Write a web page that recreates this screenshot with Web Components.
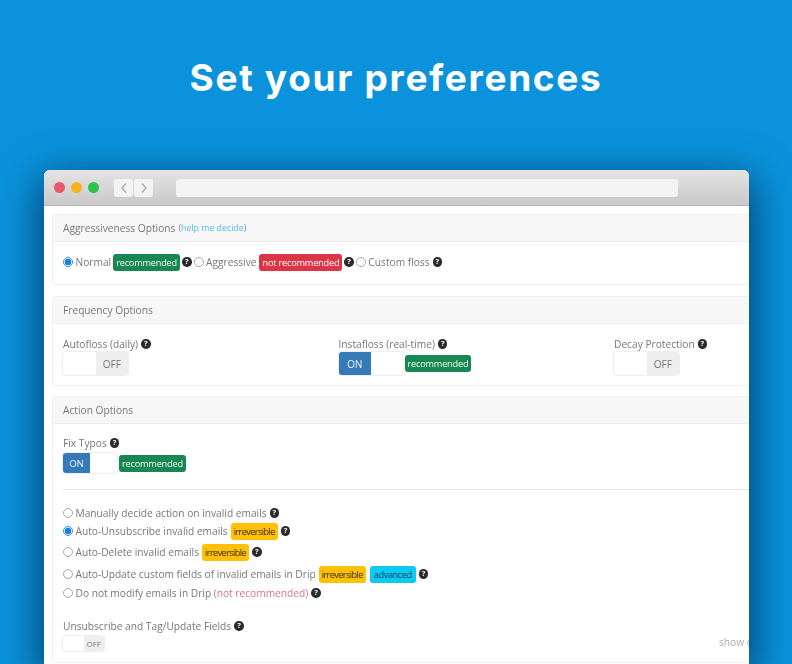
<!DOCTYPE html>
<html>
<head>
<meta charset="utf-8">
<title>Set your preferences</title>
<style>
  html, body { margin: 0; padding: 0; height: 100%; }
  body { width: 792px; height: 664px; overflow: hidden; font-family: "Open Sans", "Liberation Sans", sans-serif; }
</style>
</head>
<body>
<app-stage heading="Set your preferences">
  <browser-window>
    <option-panel heading="Aggressiveness Options">
      <span slot="extra">(<a>help me decide</a>)</span>
      <div style="display:flex;align-items:center;height:20px;margin:-1px 0 1px;white-space:nowrap">
        <radio-option checked>Normal</radio-option>
        <tag-badge kind="green" style="margin-left:2px">recommended</tag-badge>
        <help-icon style="margin-left:2px"></help-icon>
        <radio-option style="margin-left:2px">Aggressive</radio-option>
        <tag-badge kind="red" style="margin-left:3px">not recommended</tag-badge>
        <help-icon style="margin-left:2px"></help-icon>
        <radio-option style="margin-left:2px">Custom floss</radio-option>
        <help-icon style="margin-left:3px"></help-icon>
      </div>
    </option-panel>

    <option-panel heading="Frequency Options" style="margin-top:11px">
      <freq-grid>
        <labeled-field label="Autofloss (daily)">
          <toggle-switch></toggle-switch>
        </labeled-field>
        <labeled-field label="Instafloss (real-time)">
          <toggle-switch on></toggle-switch>
          <tag-badge kind="green" style="margin-left:1px">recommended</tag-badge>
        </labeled-field>
        <labeled-field label="Decay Protection">
          <toggle-switch></toggle-switch>
        </labeled-field>
      </freq-grid>
    </option-panel>

    <option-panel heading="Action Options" style="margin-top:10px">
      <labeled-field label="Fix Typos" gap="3" style="margin-top:1px">
        <toggle-switch on size="md"></toggle-switch>
        <tag-badge kind="green" style="margin-left:2px">recommended</tag-badge>
      </labeled-field>
      <divider-line></divider-line>
      <action-list>
        <action-row h="18"><radio-option>Manually decide action on invalid emails</radio-option><help-icon></help-icon></action-row>
        <action-row h="18"><radio-option checked>Auto-Unsubscribe invalid emails</radio-option><tag-badge kind="amber">irreversible</tag-badge><help-icon></help-icon></action-row>
        <action-row h="24"><radio-option>Auto-Delete invalid emails</radio-option><tag-badge kind="amber">irreversible</tag-badge><help-icon></help-icon></action-row>
        <action-row h="20"><radio-option>Auto-Update custom fields of invalid emails in Drip</radio-option><tag-badge kind="amber">irreversible</tag-badge><tag-badge kind="cyan" style="margin-left:1px">advanced</tag-badge><help-icon></help-icon></action-row>
        <action-row h="18"><radio-option>Do not modify emails in Drip <span style="color:#d9748a">(not recommended)</span></radio-option><help-icon></help-icon></action-row>
      </action-list>
      <labeled-field label="Unsubscribe and Tag/Update Fields" gap="3" style="margin-top:17px">
        <toggle-switch size="sm"></toggle-switch>
        <span style="margin-left:615px;margin-top:-4px;color:#aaa;white-space:nowrap">show options</span>
      </labeled-field>
    </option-panel>
  </browser-window>
</app-stage>

<script>
// small helper so every element is declared the same way
function define(name, css, html, extra) {
  class El extends HTMLElement {
    constructor() {
      super();
      this.attachShadow({ mode: 'open' });
      this.shadowRoot.innerHTML = `<style>${css}</style>${html}`;
    }
    connectedCallback() {
      if (extra) extra(this, this.shadowRoot);
    }
  }
  customElements.define(name, El);
}

define('app-stage', `
  :host { display: block; width: 792px; height: 664px; overflow: hidden; background: #0a93dc; }
  h1 {
    margin: 0; height: 170px; box-sizing: border-box; padding-top: 54px; text-align: center;
    font: 700 37px/48px Inter, "Liberation Sans", sans-serif; letter-spacing: 1.7px; color: #fff;
  }
  .wrap { padding: 0 43px 0 44px; }
`, `<h1></h1><div class="wrap"><slot></slot></div>`, (el, root) => {
  root.querySelector('h1').textContent = el.getAttribute('heading');
});

define('browser-window', `
  :host {
    display: block; height: 494px; border-radius: 6px 6px 0 0; overflow: hidden; background: #fff;
    box-shadow: 0 12px 42px 4px rgba(0, 35, 70, .75);
    color: #777; font-family: "Open Sans", "Liberation Sans", sans-serif; font-size: 10.2px;
    filter: blur(.4px);
  }
  .bar {
    height: 36px; box-sizing: border-box; display: flex; align-items: center; padding: 0 71px 0 10px;
    background: linear-gradient(#e4e4e4, #c9c9c9); border-bottom: 1px solid #b4b4b4;
  }
  .dot { width: 11px; height: 11px; border-radius: 50%; margin-right: 6px; }
  .nav { display: flex; gap: 1px; margin-left: 9px; }
  .nav span { width: 19px; height: 18px; background: #f3f3f3; border-radius: 3px; display: flex; align-items: center; justify-content: center; }
  .url { flex: 1; height: 18px; background: #f3f3f3; border-radius: 3px; margin-left: 23px; }
  .body { padding: 8px 0 0 8px; }
`, `
  <div class="bar">
    <div class="dot" style="background:#e9596b"></div>
    <div class="dot" style="background:#f5b324"></div>
    <div class="dot" style="background:#2fc24a"></div>
    <div class="nav">
      <span><svg width="8" height="12" viewBox="0 0 8 12"><path d="M6 1.5 2 6l4 4.5" fill="none" stroke="#a5a5a5" stroke-width="1.2"/></svg></span>
      <span><svg width="8" height="12" viewBox="0 0 8 12"><path d="M2 1.5 6 6l-4 4.5" fill="none" stroke="#a5a5a5" stroke-width="1.2"/></svg></span>
    </div>
    <div class="url"></div>
  </div>
  <div class="body"><slot></slot></div>
`);

define('option-panel', `
  :host { display: block; width: 900px; border: 1px solid #f0f0f0; border-radius: 3px; background: #fff; }
  header {
    height: 27px; box-sizing: border-box; padding: 0 10px; display: flex; align-items: center; gap: 3px;
    background: #f7f7f7; border-bottom: 1px solid #ececec; font-size: 10.2px; color: #777; white-space: nowrap;
  }
  ::slotted([slot="extra"]) { font-size: 8.8px; color: #888; }
  .content { padding: 11px 10px; }
`, `
  <header><span class="t"></span><slot name="extra"></slot></header>
  <div class="content"><slot></slot></div>
`, (el, root) => {
  root.querySelector('.t').textContent = el.getAttribute('heading');
  const link = el.querySelector('a');
  if (link) link.style.color = '#5cbcf0';
});

define('freq-grid', `
  :host { display: grid; grid-template-columns: repeat(3, 275.5px); height: 38px; margin: 2px 0 -1px; }
`, `<slot></slot>`);

define('labeled-field', `
  :host { display: block; }
  .l { display: flex; align-items: center; gap: 3px; height: 14px; white-space: nowrap; color: #777; }
  .c { display: flex; align-items: center; }
`, `<div class="l"><span></span><help-icon></help-icon></div><div class="c"><slot></slot></div>`, (el, root) => {
  root.querySelector('span').textContent = el.getAttribute('label');
  root.querySelector('.c').style.marginTop = (el.getAttribute('gap') || 1) + 'px';
});

define('toggle-switch', `
  :host { display: inline-flex; flex: none; width: 65px; height: 23px; border-radius: 3px; overflow: hidden; box-shadow: 0 0 0 1px #eee; font-size: 10px; background: #fff; }
  :host([size="md"]) { width: 54px; height: 20px; font-size: 9.5px; }
  :host([size="sm"]) { width: 41px; height: 15px; font-size: 8px; }
  div { flex: 1; display: flex; align-items: center; justify-content: center; }
  .on { background: #337ab7; color: #e8f0f7; }
  .off { background: #eee; color: #777; }
`, `<div></div><div></div>`, (el, root) => {
  const [a, b] = root.querySelectorAll('div');
  if (el.hasAttribute('on')) {
    a.className = 'on'; a.textContent = 'ON';
  } else {
    b.className = 'off'; b.textContent = 'OFF';
  }
});

define('tag-badge', `
  :host { display: inline-flex; align-items: center; flex: none; height: 17px; padding: 0 3px; border-radius: 3px; font-size: 9.2px; letter-spacing: -.2px; white-space: nowrap; font-weight: 500; }
  :host([kind="green"]) { background: #198754; color: #eafff2; }
  :host([kind="red"]) { background: #dc3545; color: #fff; }
  :host([kind="amber"]) { background: #ffc107; color: #3a2c00; padding: 0 3px; letter-spacing: -.6px; }
  :host([kind="cyan"]) { background: #0dcaf0; color: #053c6e; padding: 0 4px; letter-spacing: -.4px; }
`, `<slot></slot>`);

define('help-icon', `
  :host { display: inline-flex; flex: none; width: 9.5px; height: 9.5px; border-radius: 50%; background: #2b2b2b; color: #fff; align-items: center; justify-content: center; font: 700 7.5px/1 "Open Sans", sans-serif; }
`, `?`);

define('radio-option', `
  :host { display: inline-flex; align-items: center; gap: 2.5px; white-space: nowrap; color: #777; }
  i { width: 8px; height: 8px; border-radius: 50%; border: 1px solid #aaa; background: #fff; flex: none; }
  :host([checked]) i { border-color: #2f8fe6; background: radial-gradient(circle, #1a7fe0 0 3.2px, #fff 3.6px); }
`, `<i></i><slot></slot>`);

define('divider-line', `
  :host { display: block; height: 1px; background: #e6e6e6; margin: 16px 0 14px; }
`, ``);

define('action-list', `:host { display: block; }`, `<slot></slot>`);

define('action-row', `
  :host { display: flex; align-items: center; gap: 3px; white-space: nowrap; }
`, `<slot></slot>`, (el) => {
  el.style.height = el.getAttribute('h') + 'px';
});
</script>
</body>
</html>
